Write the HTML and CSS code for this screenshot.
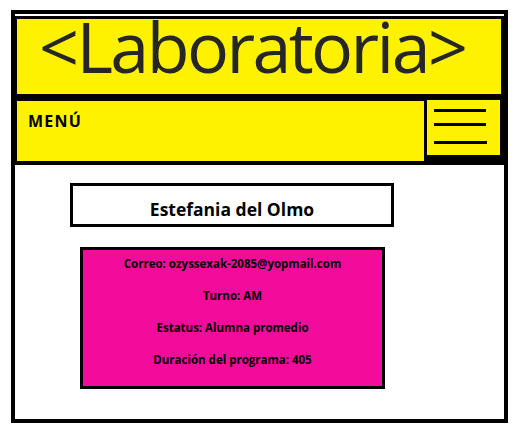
FILE: index.html
```html
<!DOCTYPE html>
<html lang="es">
<head>
    <meta charset="UTF-8">
    <meta name="viewport" content="width=device-width, initial-scale=1.0">
    <title>Laboratoria</title>
    <link rel="stylesheet" href="styles.css">
</head>
<body>
    <div class="frame">
        <header class="header">
            <h1>&lt;Laboratoria&gt;</h1>
        </header>
        <nav class="nav">
            <div class="menu">MENÚ</div>
            <div class="burger">
                <span></span>
                <span></span>
                <span></span>
            </div>
        </nav>
        <main class="content">
            <h2 class="name">Estefania del Olmo</h2>
            <div class="info">
                <p>Correo: ozyssexak-2085@yopmail.com</p>
                <p>Turno: AM</p>
                <p>Estatus: Alumna promedio</p>
                <p>Duración del programa: 405</p>
            </div>
        </main>
    </div>
</body>
</html>
```

FILE: styles.css
```css
body {
    margin: 0;
    padding: 10px 0 0 11px;
    font-family: "Open Sans", "Noto Sans", sans-serif;
    color: #000;
    background: #fff;
}
.frame {
    width: 489px;
    height: 405px;
    border: 4px solid #000;
}
.header {
    margin-top: 2px;
    height: 75px;
    border: 3px solid #000;
    border-left-width: 2px;
    background: #fff200;
}
.header h1 {
    margin: 0;
    padding-left: 22px;
    font-weight: 400;
    font-size: 70px;
    line-height: 54px;
    color: #262626;
    letter-spacing: -2.6px;
}
.nav {
    display: flex;
    align-items: flex-start;
    height: 68px;
    padding-left: 2px;
    background: #000;
}
.menu {
    width: 407px;
    height: 60px;
    margin-top: 4px;
    padding: 12px 0 0 11px;
    box-sizing: border-box;
    background: #fff200;
    font-weight: 700;
    font-size: 16px;
    line-height: 16px;
    letter-spacing: 1.2px;
}
.burger {
    display: flex;
    flex-direction: column;
    width: 73px;
    height: 55px;
    margin: 3px 0 0 3px;
    padding: 9px 0 0 7px;
    box-sizing: border-box;
    background: #fff200;
}
.burger span {
    display: block;
    width: 52px;
    height: 3px;
    background: #000;
    margin-bottom: 11px;
}
.burger span:last-child {
    margin-top: 4px;
    width: 53px;
}
.content {
    padding: 18px 0 0 55px;
}
.name {
    width: 318px;
    height: 38px;
    margin: 0;
    border: 3px solid #000;
    font-size: 17.5px;
    font-weight: 700;
    line-height: 46px;
    text-align: center;
}
.info {
    width: 305px;
    height: 142px;
    margin: 20px 0 0 10px;
    padding-top: 6px;
    border: 3px solid #000;
    background: #f20c9c;
    box-sizing: border-box;
}
.info p {
    margin: 0 0 16px;
    font-size: 11.5px;
    font-weight: 700;
    line-height: 16px;
    text-align: center;
}
```
